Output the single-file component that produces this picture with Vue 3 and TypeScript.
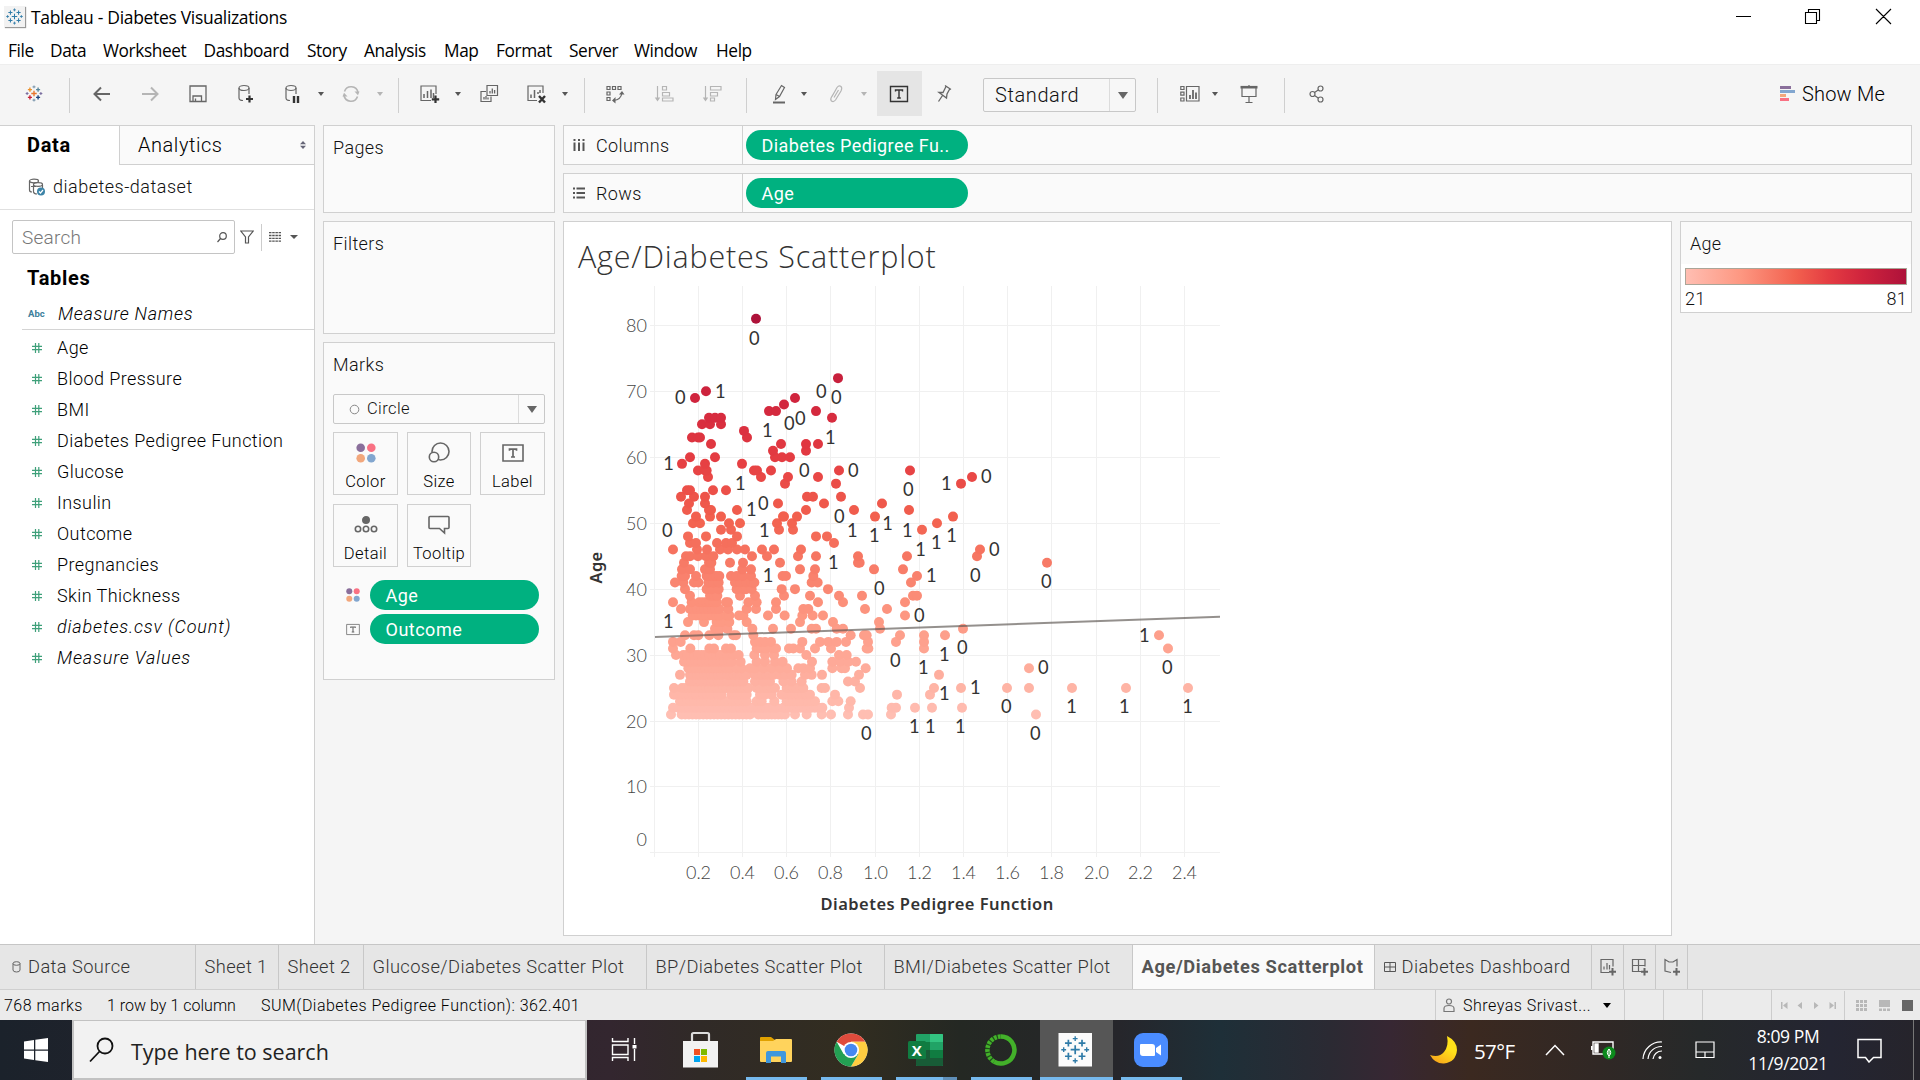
<script setup lang="ts">
interface Tool { k: 'icon' | 'sep' | 'caret' | 'text' | 'select'; ml: number; icon?: string; dim?: boolean }
interface Tab { label: string; w: number; icon?: string; active?: boolean }

const menus: [string, number][] = [
  ['File', 42], ['Data', 53], ['Worksheet', 100.5], ['Dashboard', 103.5], ['Story', 57], ['Analysis', 80],
  ['Map', 52], ['Format', 73], ['Server', 65], ['Window', 82], ['Help', 50],
]

const plus = (x: number, y: number, r: number, c: string, w: number) =>
  `<path d="M${x - r} ${y}H${x + r}M${x} ${y - r}V${y + r}" stroke="${c}" stroke-width="${w}"/>`
const mark = (c: string[], w: number) =>
  plus(10, 10, 3.2, c[0], w) + plus(5.2, 5.4, 2.4, c[1], w) + plus(14.8, 5.4, 2.4, c[2], w) +
  plus(5.2, 14.6, 2.4, c[3], w) + plus(14.8, 14.6, 2.4, c[4], w) + plus(10, 2.2, 1.7, c[5], w * 0.8) +
  plus(10, 17.8, 1.7, c[5], w * 0.8) + plus(1.9, 10, 1.7, c[6], w * 0.8) + plus(18.1, 10, 1.7, c[6], w * 0.8)
const b = '#2f7ba8'
const blueMark = mark([b, b, b, b, b, b, b], 1.2)

const icons: Record<string, string> = {
  logo: '<g transform="translate(1.5 1) scale(.85)">' + mark(['#e8762c', '#eb912c', '#59879b', '#c72035', '#1f447e', '#7f9ab0', '#7b6fa0'], 1.6) + '</g>',
  back: '<path d="M18 10H3M9 3.5L2.5 10L9 16.5" stroke-width="2"/>',
  fwd: '<path d="M2 10H17M11 3.5L17.5 10L11 16.5" stroke-width="2"/>',
  save: '<path d="M2 2H18V17.5H2ZM5 17.5V12H13.5V17.5M7.5 17V14.5" stroke-width="1.3"/>',
  db: '<ellipse cx="8" cy="4" rx="5" ry="2.5"/><path d="M3 4V14Q3 16.5 7 16.5M13 4V10"/><path d="M13.500 11.500V18.500M10 15H17" stroke-width="2.200" stroke="#333"/>',
  dbpause: '<ellipse cx="9" cy="4" rx="5" ry="2.5"/><path d="M4 4V14Q4 16.5 8 16.5M14 4V10"/><path d="M12 12V19M16 12V19" stroke-width="2.400" stroke="#333"/>',
  refresh: '<path d="M3.500 7.500A7 7 0 0 1 17 8.500M16.500 12.500A7 7 0 0 1 3 11.500" stroke-width="1.600"/><path d="M1.500 12.500L3 8.800L6.500 12.500ZM13.500 7.500H18.500L17 11.200Z" fill="currentColor" stroke="none"/>',
  sheet: '<path d="M11 16.500H1V2H16V10"/><path d="M4 14V10M7.500 14V7M11 14V5.500M13.500 14V9" stroke-width="1.500"/><path d="M15.500 11.500V19M11.800 15.300H19.200" stroke-width="2.200" stroke="#333"/>',
  dup: '<path d="M8 1.500H18.500V11.500H8ZM7 7.500H2V17.500H12V12.500"/><path d="M11 9.500V7M13.300 9.500V4.500M15.600 9.500V6M5 15.500V13M7 15.500V12M9 15.500V13.500" stroke-width="1.300"/>',
  clear: '<path d="M11 16.500H2V2H17V9"/><path d="M5 14V10.500M8.500 14V6M12 10V8M14 9V6" stroke-width="1.500"/><path d="M13 12L19 18.500M19 12L13 18.500" stroke-width="2.400" stroke="#333"/>',
  swap: '<path d="M2 2.500H5V5.500H2ZM7.500 2.500H10.500V5.500H7.500ZM13 2.500H16V5.500H13ZM2 8H5V11H2ZM2 13.500H5V16.500H2ZM8.500 16.500Q16 16 17 8.500"/><path d="M10.500 13L7 16.500L10.500 19.500ZM14 10.500L17 7L19.500 10.500Z" fill="currentColor" stroke="none"/>',
  asc: '<path d="M3.500 2V16M8.500 2.500H12.500V6H8.500ZM8.500 8.500H15.500V12H8.500ZM8.500 14H19V17H8.500Z"/><path d="M.8 13.500H6.200L3.500 17.500Z" fill="currentColor" stroke="none"/>',
  desc: '<path d="M3.500 2V16M8.500 2.500H19V6H8.500ZM8.500 8.500H15.500V12H8.500ZM8.500 14H12.500V17H8.500Z"/><path d="M.8 13.500H6.200L3.500 17.500Z" fill="currentColor" stroke="none"/>',
  pen: '<path d="M7 10.500L12.500 1.500L15.500 3.500L10.500 12.500L6.500 15.500ZM7 10.500L10.500 12.500"/><path d="M4 18.500H16" stroke-width="2"/>',
  clip: '<path d="M6 12.500L11 3.500Q13 1 15 2.500Q16.500 4 15 7L9.500 16Q7.500 18.500 5.500 17Q4 15.500 5.500 13L10 5.500M8 13.500L12.500 6"/>',
  pin: '<path d="M11 1.500L17 5.500M12 2.500L9 8.500H5L12.500 14L13 10L16 4.500M8.500 11.500L4.500 17.500" stroke-width="1.300"/>',
  cards: '<path d="M6.500 2.500H19V17H6.500ZM.8 2.500H4V5.500H.8ZM.8 8.200H4V11.200H.8ZM.8 14H4V17H.8Z"/><path d="M10 15V11M13 15V6M16 15V8.500" stroke-width="1.800"/>',
  present: '<path d="M3 4V12.500H17V4M10 13V18M6.500 18.500H13.500M10 1V3"/><path d="M1.500 3.200H18.500" stroke-width="2.600"/>',
  share: '<circle cx="5.500" cy="10" r="2.500"/><circle cx="13.500" cy="4.500" r="2.500"/><circle cx="13.500" cy="15.500" r="2.500"/><path d="M7.500 8.500L11.200 6M7.500 11.500L11.200 14"/>',
  color: '<g stroke="none"><circle cx="4.700" cy="4.800" r="4.300" fill="#8a6f9b"/><circle cx="15.300" cy="4.800" r="4.300" fill="#f97183"/><circle cx="4.700" cy="15.200" r="4.300" fill="#f2a77c"/><circle cx="15.300" cy="15.200" r="4.300" fill="#82a6cf"/></g>',
  size: '<circle cx="11.500" cy="8.500" r="8.500"/><circle cx="5" cy="14" r="4.700" fill="#fafafa"/>',
  label: '<path d="M0 2H20V18H0Z"/><path d="M6.500 7.800V6.200H13.500V7.800M10 6.200V14M8 14H12" stroke-width="1.700"/>',
  detail: '<circle cx="10" cy="5" r="3.200" fill="#666"/><circle cx="2" cy="14" r="2.700"/><circle cx="10" cy="14" r="2.700"/><circle cx="18" cy="14" r="2.700"/>',
  tooltip: '<path d="M1 1.500H19Q20 1.500 20 2.500V12.500Q20 13.500 19 13.500H15.500V18L10.500 13.500H1Q0 13.500 0 12.500V2.500Q0 1.500 1 1.500Z"/>',
  newsheet: '<path d="M11 15.500H3V2.500H15V9.500M6 12.500V9.500M9 12.500V6M11.500 12.500V8"/><path d="M14.500 11V18.500M11 14.800H18" stroke-width="2"/>',
  newdash: '<path d="M11 14.500H2.500V2.500H15V9.500M8.500 2.500V14.500M2.500 8.500H15"/><path d="M14.500 11V18.500M11 14.800H18" stroke-width="2"/>',
  newstory: '<path d="M9 15.500L3 14V2.500L7 5L9.500 5L11 5L15 2.500V9.500"/><path d="M14.500 11V18.500M11 14.800H18" stroke-width="2"/>',
}

const tools: Tool[] = [
  { k: 'icon', icon: 'logo', ml: 24 }, { k: 'sep', ml: 25 },
  { k: 'icon', icon: 'back', ml: 22 }, { k: 'icon', icon: 'fwd', ml: 28, dim: true }, { k: 'icon', icon: 'save', ml: 28 },
  { k: 'icon', icon: 'db', ml: 28 }, { k: 'icon', icon: 'dbpause', ml: 26 }, { k: 'caret', ml: 16 },
  { k: 'icon', icon: 'refresh', ml: 17, dim: true }, { k: 'caret', ml: 16, dim: true }, { k: 'sep', ml: 15 },
  { k: 'icon', icon: 'sheet', ml: 21 }, { k: 'caret', ml: 15 }, { k: 'icon', icon: 'dup', ml: 18 },
  { k: 'icon', icon: 'clear', ml: 27 }, { k: 'caret', ml: 16 }, { k: 'sep', ml: 16 },
  { k: 'icon', icon: 'swap', ml: 20 }, { k: 'icon', icon: 'asc', ml: 29, dim: true }, { k: 'icon', icon: 'desc', ml: 28, dim: true },
  { k: 'sep', ml: 24 }, { k: 'icon', icon: 'pen', ml: 22 }, { k: 'caret', ml: 12 },
  { k: 'icon', icon: 'clip', ml: 19, dim: true }, { k: 'caret', ml: 15, dim: true }, { k: 'text', ml: 10 },
  { k: 'icon', icon: 'pin', ml: 12 }, { k: 'select', ml: 29 }, { k: 'sep', ml: 21 },
  { k: 'icon', icon: 'cards', ml: 22 }, { k: 'caret', ml: 12 }, { k: 'icon', icon: 'present', ml: 21 },
  { k: 'sep', ml: 25 }, { k: 'icon', icon: 'share', ml: 22 },
]

const fields = ['Age', 'Blood Pressure', 'BMI', 'Diabetes Pedigree Function', 'Glucose', 'Insulin', 'Outcome',
  'Pregnancies', 'Skin Thickness', 'diabetes.csv (Count)', 'Measure Values']
const cards = [['color', 'Color'], ['size', 'Size'], ['label', 'Label'], ['detail', 'Detail'], ['tooltip', 'Tooltip']]

const tabs: Tab[] = [
  { label: 'Data Source', w: 196, icon: 'cyl' }, { label: 'Sheet 1', w: 83 }, { label: 'Sheet 2', w: 85 },
  { label: 'Glucose/Diabetes Scatter Plot', w: 283 }, { label: 'BP/Diabetes Scatter Plot', w: 238 },
  { label: 'BMI/Diabetes Scatter Plot', w: 248 }, { label: 'Age/Diabetes Scatterplot', w: 242, active: true },
  { label: 'Diabetes Dashboard', w: 217, icon: 'dash' },
]

/* Marks per age. Positions are thirds of a pixel from x = 560; a pair is a dense run. */
type Pos = number | [number, number]
const rows: Record<number, Pos[]> = {
  81: [588], 72: [834], 70: [438], 69: [405, 705], 68: [672], 67: [627, 648, 768], 66: [447, 465, 483, 816],
  65: [426, 450, 483], 64: [552], 63: [396, 414, 420, 561], 62: [453, 663, 738, 774], 61: [639, 738],
  60: [390, 465, 645, 666, 690], 59: [366, 435, 546], 58: [414, 435, 440, 582, 591, 633, 837, 1050],
  57: [444, 603, 684, 774, 1236], 56: [675, 828, 1203], 55: [381, 390, 459, 498],
  54: [363, 402, 435, 741, 759, 843], 53: [387, 435, 654, 792, 966], 52: [381, 447, 453, 531, 738, 882, 1047],
  51: [408, 450, 483, 669, 672, 711, 945, 1179], 50: [399, 420, 507, 540, 651, 696, 1131],
  49: [483, 513, 657, 699, 1086], 48: [384, 438, 531, 768, 801], 47: [390, 408, 471, 498, 516, 822],
  46: [339, 411, 441, 480, 504, 531, 555, 606, 642, 723, 1260],
  45: [378, 390, 414, 438, 460, 576, 621, 714, 768, 894, 1041, 1251],
  44: [372, 447, 454, 510, 549, 660, 894, 899, 1461], 43: [366, 390, 435, 450, 547, 573, 720, 765, 942, 1029],
  42: [365, 375, 408, [440, 478], 513, 530, 548, 573, 668, 678, 760, 1071],
  41: [345, 370, 402, 415, 445, 460, 476, 525, 540, 558, 575, 583, 755, 773, 1053],
  40: [375, 440, 455, 476, 530, 550, 558, 575, 665, 705, 804],
  39: [390, 450, 462, 472, 540, 585, 672, 750, 837, 906, 1059, 1071],
  38: [339, 395, [418, 470], 498, 504, 565, 590, 648, 774, 849, 1035],
  37: [363, [390, 478], 505, 560, 588, 648, 730, 745, 915, 981],
  36: [[398, 478], 498, 508, 537, 550, 624, 674, 727, 758, 789, 1035],
  35: [384, 432, 470, 485, 508, 560, 720, 819, 957], 34: [465, 480, 502, 577, 639, 693, 755, 768, 830, 849, 960, 1209],
  33: [375, 402, 415, 448, 475, 520, 528, 580, 872, 912, 920, 1020, 1092, 1155, 1797],
  32: [339, 362, 585, 600, 615, 633, 727, 780, 805, 830, 858, 924, 1008, 1092],
  31: [339, 391, 448, 462, 498, 513, 590, 603, 618, 635, 648, 687, 700, 720, 765, 813, 920, 925, 1092, 1824],
  30: [348, [370, 502], 520, 536, 583, 615, 642, 739, 837, 860],
  29: [[372, 515], 542, 590, 615, 645, 668, 756, 817, 840, 865, 888],
  28: [[385, 510], 530, 545, 570, 585, 610, 635, 660, 681, 715, 730, 750, 817, 845, 855, 917, 1407],
  27: [360, [390, 485], [502, 560], [585, 640], 660, 675, 695, 735, 755, 786, 897, 1137],
  26: [[390, 485], [502, 550], 585, 610, 630, 670, 695, 725, 864, 885],
  25: [342, [366, 500], [515, 565], [590, 645], [680, 730], 785, 795, 900, 1122, 1203, 1341, 1407, 1536, 1698, 1884],
  24: [342, [355, 485], [515, 560], 600, 615, 635, 665, [685, 750], 825, 1011, 1110],
  23: [[360, 560], 590, 605, 643, [680, 765], 817, 835, 872],
  22: [339, [355, 650], [670, 775], 787, 867, 995, 1008, 1065, 1116, 1206],
  21: [333, [365, 570], [595, 675], 705, 740, 785, 813, 864, 909, 924, 993, 1428],
}
const stops: [number, number[]][] = [
  [0, [255, 190, 178]], [0.25, [253, 151, 129]], [0.5, [242, 96, 78]], [0.65, [228, 60, 66]], [0.8, [208, 36, 61]], [1, [174, 18, 58]],
]
function ageColor(age: number): string {
  const t = (age - 21) / 60
  const i = Math.min(stops.length - 2, Math.max(0, stops.findIndex(s => s[0] >= t) - 1))
  const [t0, c0] = stops[i]
  const [t1, c1] = stops[i + 1]
  const f = (t - t0) / (t1 - t0)
  return `rgb(${c0.map((v, n) => Math.round(v + (c1[n] - v) * f)).join(',')})`
}
const yOf = (age: number) => 852.9 - age * 6.594
const dots: { x: number; y: number; c: string }[] = []
for (const key of Object.keys(rows)) {
  const age = Number(key)
  for (const p of rows[age]) {
    const list: number[] = []
    if (Array.isArray(p)) {
      const n = Math.ceil((p[1] - p[0]) / 11)
      for (let i = 0; i <= n; i++) list.push(p[0] + ((p[1] - p[0]) * i) / n)
    } else list.push(p)
    for (const v of list) dots.push({ x: 560 + v / 3, y: yOf(age), c: ageColor(age) })
  }
}
const labels: [number, number, number][] = [
  [0, 583, 356], [0, 361, 533], [1, 481, 515], [0, 784, 515], [0, 829, 533], [1, 622, 632], [0, 688, 611], [0, 721, 594],
  [1, 811, 653], [1, 326, 731], [0, 733, 752], [0, 880, 752], [1, 541, 791], [0, 1045, 809], [1, 1159, 791], [0, 610, 851],
  [1, 574, 869], [1, 613, 930], [0, 838, 890], [1, 877, 930], [1, 943, 947], [1, 983, 909], [1, 1042, 930], [1, 1129, 968],
  [1, 1175, 947], [1, 1082, 989], [0, 322, 930], [1, 820, 1028], [1, 624, 1067], [1, 1114, 1067], [1, 325, 1205],
  [0, 958, 1105], [0, 1078, 1187], [0, 1006, 1322], [1, 1090, 1343], [1, 1153, 1304], [1, 1153, 1421], [1, 1063, 1520],
  [1, 1111, 1520], [0, 919, 1540], [0, 1279, 770], [0, 1303, 988], [0, 1246, 1067], [0, 1459, 1085], [0, 1207, 1283],
  [0, 1450, 1343], [1, 1246, 1403], [0, 1339, 1460], [1, 1535, 1460], [1, 1693, 1460], [1, 1883, 1460], [1, 1201, 1520],
  [0, 1426, 1541], [1, 1753, 1245], [0, 1822, 1343],
]
const xTicks = Array.from({ length: 13 }, (_, i) => ({ x: Math.floor(654.2 + i * 44.18) + 0.5, t: (i * 0.2).toFixed(1) }))
const yTicks = Array.from({ length: 9 }, (_, i) => ({ y: Math.floor(yOf(i * 10)) + 0.5, t: String(i * 10) }))
</script>

<template>
  <div class="app">
    <header class="titlebar">
      <span class="appicon"><svg width="17" height="17" viewBox="0 0 20 20" v-html="blueMark" /></span>
      <span class="apptitle">Tableau - Diabetes Visualizations</span>
      <svg class="winbtns" width="170" height="34" fill="none" stroke="#000" stroke-width="1.1">
        <path d="M6 16.500H21M75.500 12.500H86.500V23.500H75.500ZM78.500 12.500V9.500H89.500V20.500H86.500M146 9L161 24M161 9L146 24" />
      </svg>
    </header>
    <nav class="menubar"><span v-for="m in menus" :key="m[0]" :style="{ width: m[1] + 'px' }">{{ m[0] }}</span></nav>

    <div class="toolbar">
      <template v-for="(t, i) in tools" :key="i">
        <i v-if="t.k === 'sep'" class="sep" :style="{ marginLeft: t.ml + 'px' }" />
        <i v-else-if="t.k === 'caret'" class="caret" :class="{ dim: t.dim }" :style="{ marginLeft: t.ml + 'px' }" />
        <span v-else-if="t.k === 'text'" class="tbtn" :style="{ marginLeft: t.ml + 'px' }">
          <svg width="20" height="20" fill="none" stroke="#333" stroke-width="1.4"><path d="M1.500 2.500H18.500V17.500H1.500ZM6.500 7.500V6H13.500V7.500M10 6V14M8.200 14H11.800" /></svg>
        </span>
        <span v-else-if="t.k === 'select'" class="select" :style="{ marginLeft: t.ml + 'px' }"><b>Standard</b><em><i class="bigcaret" /></em></span>
        <svg v-else class="ticon" :class="{ dim: t.dim }" :style="{ marginLeft: t.ml + 'px' }" width="20" height="20" v-html="icons[t.icon!]" />
      </template>
      <span class="showme">
        <svg width="15" height="16"><path d="M0 0H11V3H0Z" fill="#8a6f9b" /><path d="M0 4H15V7H0Z" fill="#82a6cf" /><path d="M0 8H6V11H0Z" fill="#f2a77c" /><path d="M0 12H9V15H0Z" fill="#f97183" /></svg>
        Show Me
      </span>
    </div>

    <main class="body">
      <aside class="side">
        <div class="sidetabs">
          <b>Data</b>
          <div class="analytics">Analytics<svg width="6" height="8"><path d="M0 3.200L3 0L6 3.200ZM0 4.800L3 8L6 4.800Z" fill="#667" /></svg></div>
        </div>
        <div class="source">
          <svg width="18" height="18" fill="none" stroke="#666" stroke-width="1.2">
            <ellipse cx="6" cy="3" rx="4.500" ry="1.800" /><path d="M1.500 3V12Q1.500 14 4 14M5.500 7V14Q6 16 9 16M14.500 7V10M3 8.500H8" /><ellipse cx="10" cy="6.500" rx="4.500" ry="1.800" /><circle cx="13" cy="13.500" r="4" fill="#3d84a8" stroke="none" /><path d="M11 13.500L12.500 15L15 12" stroke="#fff" />
          </svg>diabetes-dataset
        </div>
        <div class="searchrow">
          <div class="search">Search
            <svg width="10" height="11" fill="none" stroke="#555" stroke-width="1.2"><circle cx="6" cy="4" r="3.300" /><path d="M3.500 6.500L.5 10" /></svg>
          </div>
          <svg width="14" height="14" fill="none" stroke="#555" stroke-width="1.2"><path d="M.8 1H13.200L8.500 7V13H5.500V7Z" /></svg>
          <i class="vline" />
          <svg width="12" height="10" stroke="#555" stroke-width="1.300" stroke-dasharray="2.500 .7"><path d="M0 .7H12M0 3.500H12M0 6.300H12M0 9.100H12" /></svg>
          <i class="caret wide" />
        </div>
        <h2>Tables</h2>
        <div class="names"><small>Abc</small><i>Measure Names</i></div>
        <ul>
          <li v-for="(f, i) in fields" :key="f" :class="{ it: i > 8 }">
            <svg width="10" height="10" stroke="#3fa07a" stroke-width="1.2"><path d="M3.500 0V10M6.800 0V10M0 3.300H10M0 6.700H10" /></svg>{{ f }}
          </li>
        </ul>
      </aside>

      <section class="shelves">
        <div class="card pages">Pages</div>
        <div class="card filters">Filters</div>
        <div class="card marks">
          <span>Marks</span>
          <div class="marktype"><svg width="11" height="11"><circle cx="5.500" cy="5.500" r="4.300" fill="none" stroke="#888" /></svg><b>Circle</b><em><i class="bigcaret" /></em></div>
          <div class="grid">
            <div v-for="c in cards" :key="c[0]" class="cell"><svg width="20" height="20" v-html="icons[c[0]]" />{{ c[1] }}</div>
          </div>
          <div class="markpill"><svg width="14" height="14" viewBox="0 0 20 20" v-html="icons.color" /><span class="pill">Age</span></div>
          <div class="markpill"><svg width="13" height="13" viewBox="-1 0 22 20" v-html="icons.label" /><span class="pill">Outcome</span></div>
        </div>
      </section>

      <section class="work">
        <div class="shelf">
          <div class="shelfname"><svg width="12" height="12" stroke="#555" stroke-width="2"><path d="M1.500 3.500V12M6 3.500V12M10.500 3.500V12M1.500 0V2M6 0V2M10.500 0V2" /></svg><span>Columns</span></div>
          <span class="pill">Diabetes Pedigree Fu..</span>
        </div>
        <div class="shelf">
          <div class="shelfname"><svg width="12" height="12" stroke="#555" stroke-width="2"><path d="M3.500 1.500H12M3.500 6H12M3.500 10.500H12M0 1.500H2M0 6H2M0 10.500H2" /></svg><span>Rows</span></div>
          <span class="pill">Age</span>
        </div>
        <div class="viewrow">
          <div class="view">
            <svg width="1107" height="713" viewBox="564 222 1107 713">
              <text class="vtitle" x="578" y="268" textLength="358">Age/Diabetes Scatterplot</text>
              <g stroke="#f0f0f0">
                <path v-for="t in xTicks" :key="t.t" :d="`M${t.x} 286V857`" />
                <path v-for="t in yTicks" :key="t.t" :d="`M650 ${t.y}H1220`" />
              </g>
              <g class="axis">
                <text v-for="t in xTicks.slice(1)" :key="t.t" :x="t.x" y="879" text-anchor="middle">{{ t.t }}</text>
                <text v-for="t in yTicks" :key="t.t" x="647" :y="(t.t === '0' ? 839.5 : t.y) + 6.500" text-anchor="end">{{ t.t }}</text>
              </g>
              <circle v-for="(d, i) in dots" :key="i" :cx="d.x" :cy="d.y" r="5" :fill="d.c" />
              <path d="M655 637L1220 616.700" stroke="#5a5450" stroke-opacity=".65" stroke-width="2" />
              <g class="mlabels">
                <text v-for="(l, i) in labels" :key="i" :x="560 + l[1] / 3" :y="226.500 + l[2] / 3" text-anchor="middle">{{ l[0] }}</text>
              </g>
              <text class="atitle" x="820.500" y="910" textLength="233">Diabetes Pedigree Function</text>
              <text class="atitle" transform="translate(602 583.500) rotate(-90)" textLength="32">Age</text>
            </svg>
          </div>
          <div class="legend">
            <div class="lh">Age</div>
            <div class="bar" />
            <div class="lr"><span>21</span><span>81</span></div>
          </div>
        </div>
      </section>
    </main>

    <div class="tabs">
      <div v-for="t in tabs" :key="t.label" class="tab" :class="{ active: t.active, src: t.icon === 'cyl' }" :style="{ width: t.w + 'px' }">
        <svg v-if="t.icon === 'cyl'" width="9" height="12" fill="none" stroke="#666"><ellipse cx="4.500" cy="2.500" rx="3.500" ry="1.800" /><path d="M1 2.500V9Q1 11 4.500 11T8 9V2.500" /></svg>
        <svg v-if="t.icon === 'dash'" width="12" height="12" fill="none" stroke="#555"><path d="M.5 1.500H11.500V10.500H.5ZM6 1.500V10.500M.5 6H11.500" /></svg>
        <span>{{ t.label }}</span>
      </div>
      <div v-for="n in ['newsheet', 'newdash', 'newstory']" :key="n" class="tab add"><svg width="20" height="20" v-html="icons[n]" /></div>
    </div>

    <div class="status">
      <span class="s1">768 marks</span><span class="s2">1 row by 1 column</span><span>SUM(Diabetes Pedigree Function): 362.401</span>
      <div class="user"><svg width="12" height="15" fill="none" stroke="#777" stroke-width="1.200"><circle cx="6" cy="3.500" r="2.500" /><path d="M1 13.500V10.500Q1 7.500 6 7.500T11 10.500V13.500Z" /></svg><span>Shreyas Srivast...</span><i class="caret blk" /></div>
      <i class="c1" /><i class="c2" /><i class="c3" />
      <svg class="navs" width="72" height="29" fill="#b8b8b8"><path d="M9 11H10.500V18H9ZM15.500 11V18L11 14.500ZM30 11V18L25.500 14.500ZM42 11V18L46.500 14.500ZM57.500 11V18L62 14.500ZM62.500 11H64V18H62.500Z" /></svg>
      <svg class="modes" width="75" height="29"><path d="M11 9H14V12H11ZM15 9H18V12H15ZM19 9H22V12H19ZM11 13H14V16H11ZM15 13H18V16H15ZM19 13H22V16H19ZM11 17H14V20H11ZM15 17H18V20H15ZM19 17H22V20H19ZM34 9H45V16H34ZM34 17.500H37V20H34ZM38 17.500H41V20H38ZM42 17.500H45V20H42Z" fill="#b8b8b8" /><path d="M57 9H68V20H57Z" fill="#666" /></svg>
    </div>

    <footer class="taskbar">
      <div class="start"><svg width="24" height="24" fill="#fff"><path d="M0 3.400L10 2V11.500H0ZM11.300 1.800L24 0V11.500H11.300ZM0 12.700H10V22L0 20.600ZM11.300 12.700H24V24L11.300 22.200Z" /></svg></div>
      <div class="tsearch"><svg width="26" height="26" fill="none" stroke="#111" stroke-width="1.800"><circle cx="16" cy="9" r="7.500" /><path d="M10.500 14.500L1 24.500" /></svg><span>Type here to search</span></div>
      <div class="apps">
        <svg width="73" height="60" fill="none" stroke="#fff" stroke-width="1.400"><path d="M25.500 18V21.500H41V18M25.500 41V37.500H41V41M25.500 25H41V34.500H25.500ZM47.500 18V24M47.500 29V41" /><path d="M45.500 25H49.500V28.500H45.500Z" fill="#fff" stroke="none" /></svg>
        <svg width="80" height="60"><path d="M32 23V14.500Q32 13 33.500 13H47.500Q49 13 49 14.500V23" fill="none" stroke="#ddd" stroke-width="2.200" /><path d="M23 21H58V47.500H23Z" fill="#f2f2f2" /><path d="M34 29H40V35H34Z" fill="#f25022" /><path d="M41 29H47V35H41Z" fill="#7fba00" /><path d="M34 36H40V42H34Z" fill="#00a4ef" /><path d="M41 36H47V42H41Z" fill="#ffb900" /></svg>
        <svg class="run" width="61" height="60"><path d="M14 18Q14 17 15 17H25L29 20H30V28H14Z" fill="#e0a100" /><path d="M14 21H27L30 19H45Q46 19 46 20V41Q46 42 45 42H15Q14 42 14 41Z" fill="#ffd35c" /><path d="M20 43V33Q20 31 22 31H38Q40 31 40 33V43H35V36.500H25V43Z" fill="#3f97dd" /></svg>
        <svg class="run" width="61" height="60"><circle cx="30" cy="30" r="16.500" fill="#fff" /><path d="M30 30L15.700 21.700A16.500 16.500 0 0 1 44.300 21.700H30Z" fill="#df4b3c" /><path d="M30 21.700H44.300A16.500 16.500 0 0 1 30 46.500L37.400 34Z" fill="#ffcd41" /><path d="M22.600 34L15.700 21.700A16.500 16.500 0 0 0 30 46.500L37.400 34Z" fill="#23a053" /><circle cx="30" cy="30" r="8" fill="#fff" /><circle cx="30" cy="30" r="6.300" fill="#4688f1" /></svg>
        <svg class="run xl" width="61" height="60"><path d="M21 14H46Q47 14 47 15V45Q47 46 46 46H21Q20 46 20 45V15Q20 14 21 14Z" fill="#21a366" /><path d="M34 14H46Q47 14 47 15V22H34Z" fill="#33c481" /><path d="M20 22H34V30H20Z" fill="#107c41" /><path d="M20 30H34V46H21Q20 46 20 45Z" fill="#185c37" /><path d="M34 30H47V38H34Z" fill="#107c41" /><path d="M34 38H47V45Q47 46 46 46H34Z" fill="#185c37" /><rect x="12" y="21" width="18" height="18" rx="1.500" fill="#107c41" /><text x="21" y="35.500" text-anchor="middle" fill="#fff" font-size="15" font-weight="700">X</text><path d="M47 57H61V60H47Z" fill="#5f8fb8" /></svg>
        <svg class="run" width="61" height="60" fill="none"><circle cx="30" cy="30" r="13.500" stroke="#204a1c" stroke-width="4.500" /><path d="M30 16.500A13.500 13.500 0 1 1 23 41.600" stroke="#43b02a" stroke-width="4.500" /><path d="M23 41.600A13.500 13.500 0 0 1 30 16.500" stroke="#43b02a" stroke-width="4.500" stroke-dasharray="2.800 1.200" /></svg>
        <svg class="run act" width="73" height="60"><rect x="18.500" y="13" width="33.500" height="33.500" fill="#fbfbfb" /><g transform="translate(21 15.500) scale(1.420)" v-html="blueMark" /></svg>
        <svg class="run" width="61" height="60"><rect x="13" y="13" width="34" height="34" rx="9" fill="#4a8cff" /><path d="M19 25Q19 24 20 24H31Q34 24 34 27V35Q34 36 33 36H22Q19 36 19 33ZM35 28L40 24.500V35.500L35 32Z" fill="#fff" /></svg>
      </div>
      <div class="tray">
        <svg width="28" height="28"><defs><linearGradient id="moon" x1="0" y1="1" x2=".6" y2="0"><stop offset="0" stop-color="#f79a1c" /><stop offset=".7" stop-color="#ffe11a" /></linearGradient></defs><path d="M17 0Q27 5 27 14Q26 26 14 27.500Q5 28 0 19Q9 22 14 16Q19 10 17 0Z" fill="url(#moon)" /></svg>
        <span class="temp">57°F</span>
        <svg class="chev" width="20" height="12" fill="none" stroke="#fff" stroke-width="1.500"><path d="M1 11L10 1.500L19 11" /></svg>
        <svg class="batt" width="26" height="20" fill="none" stroke="#fff" stroke-width="1.400"><path d="M2 2H22V14H2ZM.5 6V10" /><path d="M4 4H7V12H4Z" fill="#fff" /><ellipse cx="18" cy="13" rx="6.500" ry="6.500" fill="#0c8a1c" stroke="none" /><path d="M18 9Q14.500 13 18 16Q21.500 13 18 9V18" stroke-width="1" /></svg>
        <svg class="wifi" width="22" height="20" fill="none" stroke="#fff" stroke-width="1.200"><path d="M1 19A18 18 0 0 1 20 2M6 19A13.500 13.500 0 0 1 20 6.500M11 19A9 9 0 0 1 20 11" /><circle cx="18" cy="17.500" r="1.500" fill="#fff" stroke="none" /></svg>
        <svg class="pad" width="20" height="18" fill="none" stroke="#fff" stroke-width="1.200"><path d="M1 1H19V16.500H1ZM1 11H19M10 11V16.500" /></svg>
        <div class="clock"><span>8:09 PM</span><span>11/9/2021</span></div>
        <svg class="note" width="25" height="25" fill="none" stroke="#fff" stroke-width="1.500"><path d="M1 1.500H24V19.500H16.500L12 24L8.500 19.500H1Z" /></svg>
        <i class="peek" />
      </div>
    </footer>
  </div>
</template>

<style>
body { margin: 0; overflow: hidden; }
</style>

<style scoped>
* { box-sizing: border-box; }
.app { width: 1920px; height: 1080px; display: flex; flex-direction: column; overflow: hidden; background: #f5f5f5; font: 300 18px/1 Roboto, sans-serif; letter-spacing: .25px; color: #111; white-space: nowrap; }
svg { display: block; flex: none; }
.titlebar { height: 34px; display: flex; align-items: center; background: #fff; flex: none; font: 400 17.500px "Open Sans", sans-serif; letter-spacing: -.32px; color: #000; }
.appicon { width: 21px; height: 21px; margin: 0 6px 2px 4px; background: #f2f2f2; display: grid; place-items: center; box-shadow: 1px 1px 1px #999; }
.winbtns { margin-left: auto; margin-right: 20px; }
.menubar { height: 30px; display: flex; flex: none; background: #fff; padding: 4px 0 0 8px; font: 400 17.300px/26px "Open Sans", sans-serif; letter-spacing: -.4px; color: #000; }
.menubar span { flex: none; }
.toolbar { height: 61px; flex: none; display: flex; align-items: center; border-top: 1px solid #eee; padding-bottom: 3px; }
.toolbar .sep { width: 1px; height: 35px; background: #cfcfcf; flex: none; margin-top: 3px; }
.caret { width: 6px; height: 0; border: 3px solid transparent; border-top: 4px solid #555; border-bottom: 0; flex: none; }
.caret.dim { border-top-color: #b5b5b5; }
.caret.wide { border-width: 4px 4px 0; }
.caret.blk { border-top-color: #000; border-width: 5px 4px 0; }
.ticon, .cell svg, .markpill svg, .add svg { fill: none; stroke: #666; color: #666; stroke-width: 1.2; overflow: visible; }
.ticon.dim { stroke: #b5b5b5; color: #b5b5b5; }
.tbtn { width: 45px; height: 45px; background: #e5e5e5; display: grid; place-items: center; flex: none; padding-right: 2px; }
.select, .marktype { display: flex; border: 1px solid #c8c8c8; border-radius: 2px; background: #f7f7f7; flex: none; }
.select { width: 153px; height: 34px; font-size: 20px; letter-spacing: .6px; margin-top: 3px; }
.select b { font-weight: 300; flex: 1; padding: 6px 0 0 11px; }
.select em, .marktype em { width: 26px; border-left: 1px solid #dcdcdc; display: grid; place-items: center; }
.bigcaret { border: 5px solid transparent; border-top: 7px solid #666; border-bottom: 0; }
.showme { margin: 0 35px 0 auto; display: flex; gap: 7px; align-items: center; font-size: 20px; letter-spacing: .2px; color: #000; }
.body { height: 819px; flex: none; display: flex; }
.side { width: 315px; background: #fff; border: 1px solid #d0d0d0; border-width: 1px 1px 0 0; flex: none; }
.sidetabs { display: flex; height: 39px; }
.sidetabs b { width: 119px; padding: 9px 0 0 27px; font-size: 20px; font-weight: 700; color: #000; letter-spacing: .7px; }
.analytics { flex: 1; display: flex; justify-content: space-between; align-items: center; background: #fafafa; border: 1px solid #d0d0d0; border-width: 0 0 1px 1px; padding: 0 8px 0 18px; font-size: 20px; color: #000; letter-spacing: .55px; }
.source { height: 45px; border-bottom: 1px solid #e0e0e0; display: flex; align-items: center; gap: 7px; padding-left: 28px; letter-spacing: .5px; }
.searchrow { display: flex; align-items: center; padding: 10px 0 0 12px; }
.search { width: 223px; height: 34px; border: 1px solid #c4c4c4; border-radius: 2px; display: flex; justify-content: space-between; align-items: center; padding: 0 7px 0 9px; color: #777; font-size: 19px; margin-right: 5px; }
.vline { width: 1px; height: 27px; background: #ccc; margin: 0 7px; }
.caret.wide { margin-left: 9px; width: 8px; }
h2 { margin: 0; padding: 13px 0 0 27px; font-size: 20px; line-height: 22px; font-weight: 700; color: #000; letter-spacing: .7px; }
.names { margin: 9px 0 0 22px; height: 32px; border-bottom: 1px solid #d4d4d4; display: flex; align-items: center; color: #000; letter-spacing: .7px; }
.names small { font-size: 9.500px; width: 36px; padding-left: 6px; font-weight: 700; color: #3d7f9c; letter-spacing: 0; }
ul { list-style: none; margin: 0; padding: 2px 0 0 32px; }
li { height: 31px; display: flex; align-items: center; gap: 15px; color: #000; letter-spacing: .42px; }
.it { font-style: italic; letter-spacing: .85px; }
.shelves { width: 232px; margin-left: 8px; flex: none; display: flex; flex-direction: column; gap: 8px; }
.card { background: #fafafa; border: 1px solid #d0d0d0; padding: 13px 9px 0; font-size: 18px; letter-spacing: .4px; }
.pages { height: 88px; }
.filters { height: 113px; }
.marks { height: 338px; }
.marktype { height: 30px; margin: 20px 0 8px; font-size: 16.500px; align-items: center; background: #fafafa; }
.marktype svg { margin: 0 7px 0 15px; }
.marktype b { font-weight: 300; flex: 1; }
.marktype em { height: 28px; }
.grid { display: grid; grid-template-columns: 65px 64px 65px; gap: 9px; justify-content: space-between; }
.cell { height: 63px; border: 1px solid #d0d0d0; display: flex; flex-direction: column; align-items: center; justify-content: space-between; padding: 10px 0 4px; font-size: 16.500px; color: #000; }
.cell svg { stroke-width: 1.6; }
.markpill { display: flex; align-items: center; gap: 10px; padding: 0 6px 0 13px; margin-top: 4px; }
.grid + .markpill { margin-top: 13px; }
.markpill svg { width: 14px; }
.pill { height: 30px; border-radius: 15px; background: #00b180; color: #fff; flex: 1; padding: 7px 0 0 15.500px; font-size: 18px; font-weight: 400; letter-spacing: .5px; }
.work { flex: 1; margin: 0 8px 0 8px; display: flex; flex-direction: column; gap: 8px; }
.shelf { height: 40px; background: #fafafa; border: 1px solid #d0d0d0; display: flex; align-items: center; flex: none; }
.shelfname { width: 179px; height: 38px; border-right: 1px solid #d0d0d0; display: flex; align-items: center; gap: 11px; padding-left: 9px; margin-right: 3px; letter-spacing: .4px; }
.shelfname span { padding-top: 1px; }
.shelf .pill { flex: none; width: 222px; letter-spacing: .42px; }
.viewrow { display: flex; gap: 8px; align-items: flex-start; }
.view { width: 1109px; height: 715px; border: 1px solid #d0d0d0; background: #fff; overflow: hidden; flex: none; }
.vtitle { font: 300 30.500px "Open Sans", sans-serif; fill: #333; }
.axis { font: 300 18px Lato, sans-serif; fill: #444; letter-spacing: 0; }
.mlabels { font: 400 18.300px Lato, sans-serif; fill: #333; letter-spacing: 0; }
.atitle { font: 600 16.500px "Noto Sans", sans-serif; fill: #333; }
.legend { flex: 1; height: 92px; border: 1px solid #d0d0d0; background: #fff; }
.lh { height: 42px; background: #fafafa; padding: 13px 0 0 9px; }
.bar { height: 17px; margin: 4px 4px 5px; border: 1px solid #aaa598; background: linear-gradient(90deg, #ffbeb2, #fd9781 25%, #f2604e 50%, #e43c42 65%, #d0243d 80%, #ae123a); }
.lr { display: flex; justify-content: space-between; padding: 0 4px; }
.tabs { height: 46px; flex: none; display: flex; background: #e6e6e6; border-top: 1px solid #c6c6c6; border-bottom: 1px solid #cfcfcf; color: #333; font-size: 18.300px; letter-spacing: .4px; }
.tab { flex: none; border-right: 1px solid #c8c8c8; display: flex; align-items: center; padding-left: 8.500px; gap: 6px; }
.tab span { padding-top: 1px; }
.tab.src { padding-left: 12px; gap: 7px; }
.tab.active { background: #fafafa; font-weight: 700; letter-spacing: .62px; color: #555; }
.tab.active span { padding-top: 0; }
.add { width: 32px; padding: 0 0 0 6px; }
.status { height: 30px; flex: none; display: flex; align-items: center; background: #ebebeb; font-size: 16px; color: #000; padding-left: 4px; letter-spacing: .48px; }
.status span { padding-top: 1px; }
.s1 { width: 103px; }
.s2 { width: 154px; letter-spacing: .02px; }
.user { margin-left: auto; width: 190px; height: 30px; border: 1px solid #ccc; border-width: 0 1px; display: flex; align-items: center; padding-left: 7px; gap: 8px; letter-spacing: .5px; }
.user .caret { margin-left: 4px; width: 8px; }
.c1, .c2, .c3 { width: 39px; height: 30px; border-right: 1px solid #ccc; }
.c3 { width: 69px; }
.navs { border-right: 1px solid #ccc; width: 73px; }
.taskbar { height: 60px; flex: none; display: flex; font-family: "Open Sans", sans-serif; font-weight: 400; background: linear-gradient(90deg, #1b222b 0, #33262f 610px, #302a27 700px, #322d20 850px, #242823 960px, #26262b 1120px, #1e2f38 1220px, #2b2a33 1330px, #372733 1390px, #3b2920 1470px, #302825 1600px, #26292a 1700px, #242532 1830px, #26242b 1920px); }
.start { width: 72px; display: grid; place-items: center; }
.tsearch { width: 515px; border: 2px solid #c2c2c2; border-top-width: 1px; background: #f2f2f2; display: flex; align-items: center; gap: 16px; padding-left: 15px; font-size: 21.500px; letter-spacing: 0; color: #222; }
.tsearch span { padding-top: 4px; }
.apps { display: flex; }
.apps .run { box-shadow: inset 0 -3px #76b9ed; margin-left: 14px; }
.apps svg:nth-child(3) { margin-left: 6px; }
.apps .act { background: #565656; margin-left: 8px; }
.apps .act + .run { margin-left: 8px; }
.tray { margin-left: auto; display: flex; align-items: center; color: #fff; padding-right: 6px; }
.temp { font-size: 20.500px; letter-spacing: -.6px; margin-left: 16px; width: 71px; padding-top: 3px; }
.chev { margin-right: 26px; }
.batt { margin-right: 25px; }
.wifi { margin-right: 31px; }
.pad { margin-right: 35px; }
.clock { width: 76px; display: flex; flex-direction: column; align-items: center; gap: 10px; font-size: 17.500px; letter-spacing: -.4px; }
.note { margin: 0 31px; }
.peek { width: 1px; height: 60px; background: #777; }
</style>
